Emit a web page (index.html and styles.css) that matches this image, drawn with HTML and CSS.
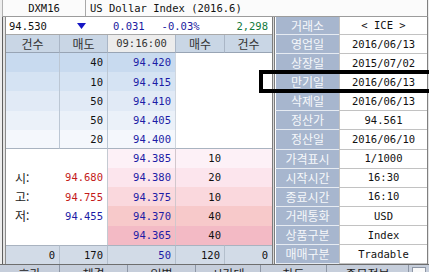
FILE: index.html
```html
<!DOCTYPE html>
<html lang="ko">
<head>
<meta charset="utf-8">
<title>DXM16</title>
<link rel="stylesheet" href="styles.css">
</head>
<body>
<div class="app">
  <div class="title-row">
    <div class="code">DXM16</div>
    <div class="name">US Dollar Index (2016.6)</div>
  </div>
  <div class="main">
    <div class="left">
      <div class="quote">
        <span class="last">94.530</span>
        <svg class="tri" width="9" height="6" viewBox="0 0 9 6"><path d="M0 0H9L4.5 6Z" fill="#1616c4"/></svg>
        <span class="chg">0.031</span>
        <span class="pct">-0.03%</span>
        <span class="vol">2,298</span>
      </div>
      <div class="book">
        <div class="c h ko">건수</div>
        <div class="c h ko">매도</div>
        <div class="c h time">09:16:00</div>
        <div class="c h ko">매수</div>
        <div class="c h ko last-h">건수</div>

        <div class="c a1 ac1"></div><div class="c a1 ac2">40</div><div class="c a1 ac3 px">94.420</div><div class="c aw"></div><div class="c aw"></div>
        <div class="c a2 ac1"></div><div class="c a2 ac2">10</div><div class="c a2 ac3 px">94.415</div><div class="c aw"></div><div class="c aw"></div>
        <div class="c a3 ac1"></div><div class="c a3 ac2">50</div><div class="c a3 ac3 px">94.410</div><div class="c aw"></div><div class="c aw"></div>
        <div class="c a4 ac1"></div><div class="c a4 ac2">50</div><div class="c a4 ac3 px">94.405</div><div class="c aw"></div><div class="c aw"></div>
        <div class="c a5 ac1 sep"></div><div class="c a5 ac2 sep">20</div><div class="c a5 ac3 px sep">94.400</div><div class="c aw sep"></div><div class="c aw sep"></div>

        <div class="c bl"></div><div class="c bv"></div><div class="c b1 bp px">94.385</div><div class="c b1">10</div><div class="c b1"></div>
        <div class="c bl ko">시:</div><div class="c bv up">94.680</div><div class="c b2 bp px">94.380</div><div class="c b2">20</div><div class="c b2"></div>
        <div class="c bl ko">고:</div><div class="c bv up">94.755</div><div class="c b3 bp px">94.375</div><div class="c b3">10</div><div class="c b3"></div>
        <div class="c bl ko">저:</div><div class="c bv dn">94.455</div><div class="c b4 bp px">94.370</div><div class="c b4">40</div><div class="c b4"></div>
        <div class="c bl"></div><div class="c bv"></div><div class="c b5 bp px">94.365</div><div class="c b5">40</div><div class="c b5"></div>

        <div class="c t">0</div><div class="c t">170</div><div class="c t px">50</div><div class="c t">120</div><div class="c t tl">0</div>
      </div>
    </div>
    <div class="divider"></div>
    <div class="info">
      <div class="c l ko first">거래소</div><div class="c v first">&lt; ICE &gt;</div>
      <div class="c l ko">영업일</div><div class="c v">2016/06/13</div>
      <div class="c l ko">상장일</div><div class="c v">2015/07/02</div>
      <div class="c l ko">만기일</div><div class="c v">2016/06/13</div>
      <div class="c l ko">삭제일</div><div class="c v">2016/06/13</div>
      <div class="c l ko">정산가</div><div class="c v">94.561</div>
      <div class="c l ko">정산일</div><div class="c v">2016/06/10</div>
      <div class="c l ko">가격표시</div><div class="c v">1/1000</div>
      <div class="c l ko">시작시간</div><div class="c v">16:30</div>
      <div class="c l ko">종료시간</div><div class="c v">16:10</div>
      <div class="c l ko">거래통화</div><div class="c v">USD</div>
      <div class="c l ko">상품구분</div><div class="c v">Index</div>
      <div class="c l ko">매매구분</div><div class="c v">Tradable</div>
    </div>
  </div>
  <div class="tabs">
    <div class="tab ko w1">호가</div>
    <div class="tab ko w2">체결</div>
    <div class="tab ko w3">일별</div>
    <div class="tab ko w4">시간대</div>
    <div class="tab ko w5">차트</div>
    <div class="tab ko w6">종목정보</div>
    <div class="tab-box"></div>
  </div>
  <div class="mark"></div>
</div>
</body>
</html>
```
FILE: styles.css
```css
* { box-sizing: border-box; }
html, body { margin: 0; padding: 0; }
body { background: #f0f0f0; }

.app {
  position: relative;
  width: 429px;
  height: 272px;
  overflow: hidden;
  background: #eeeeee;
  font-family: "DejaVu Sans Mono", "Noto Sans CJK KR", monospace;
  font-size: 10.5px;
  color: #111;
}

.ko { font-family: "Noto Sans CJK KR", sans-serif; font-size: 12px; }

/* title */
.title-row {
  display: flex;
  height: 17px;
  width: 426px;
  margin-left: 2px;
  background: #fbfbfb;
  border-bottom: 1px solid #9c9c9c;
  border-right: 1px solid #808080;
  border-left: 1px solid #b0b0b0;
}
.code {
  width: 83px;
  text-align: center;
  line-height: 16px;
  border-right: 1px solid #a8a8a8;
}
.name { padding-left: 4px; line-height: 16px; }

/* main */
.main {
  display: flex;
  height: 247px;
  margin-left: 2px;
  border-left: 1px solid #5f5f5f;
  padding-left: 2px;
  background: #e4e4e4;
}
.left {
  width: 267px;
  display: flex;
  flex-direction: column;
  border-left: 1px solid #8c8c8c;
  background: #fff;
}

.quote {
  height: 18px;
  display: flex;
  align-items: center;
  border-bottom: 1px solid #a9a9a9;
  background: #fff;
}
.last { width: 71px; padding-left: 3px; }
.tri { margin-top: 1px; }
.chg { margin-left: 27px; color: #1a1aa0; }
.pct { margin-left: 17px; color: #1a1aa0; }
.vol { margin-left: auto; padding-right: 4px; color: #137a3c; }

.book {
  flex: 1;
  display: grid;
  grid-template-columns: 54px 48px 68px 49px 47px;
  grid-template-rows: 18px repeat(11, 1fr);
  background: #fff;
}
.c {
  display: flex;
  align-items: center;
  justify-content: flex-end;
  padding-right: 4px;
  line-height: 1;
  white-space: nowrap;
}
.h {
  justify-content: center;
  padding: 0;
  background: #c9d6e5;
  color: #333;
  border-right: 1px solid #aab6c6;
  border-bottom: 1px solid #98a4b4;
}
.h.time { background: #ececec; }
.h.last-h { border-right: 0; }

.px { color: #1c1ca6; }

.a1 { background: #c8daef; }
.a2 { background: #d5e3f3; }
.a3 { background: #e1eaf6; }
.a4 { background: #ebf1f9; }
.a5 { background: #f4f7fc; }
.ac1, .ac2 { border-right: 1px solid #bcc7d4; }
.ac3 { border-right: 1px solid #d0d6de; }
.aw { background: #fff; }
.sep { border-bottom: 1px solid #a9b3c0; }

.bl { justify-content: flex-start; padding-left: 9px; color: #222; }
.bv { border-right: 1px solid #c4cad2; }
.bp { border-right: 1px solid #d2c6cc; }
.up { color: #c41a1a; }
.dn { color: #1c1ca6; }
.b1 { background: #fdf1f7; }
.b2 { background: #fce5ed; }
.b3 { background: #fad8dd; }
.b4 { background: #f7c9ca; }
.b5 { background: #f3bac5; }

.t {
  background: #d2dbe7;
  border-top: 1px solid #a9b3c0;
  border-right: 1px solid #b4bfcc;
}
.t.tl { border-right: 0; }

.divider {
  width: 3px;
  background: #d8d8d8;
  border-left: 1px solid #7c7c7c;
  border-right: 1px solid #7c7c7c;
}

.info {
  width: 153px;
  display: grid;
  grid-template-columns: 64px 88px;
  grid-template-rows: 18px repeat(12, 1fr);
  border-right: 1px solid #808080;
  background: #fff;
}
.l {
  justify-content: center;
  padding: 0;
  background: #a7b6ce;
  color: #f6f8fb;
  border-left: 1px solid #fff;
  border-bottom: 1px solid #e6ebf2;
}
.v {
  justify-content: center;
  padding: 0;
  border-left: 1px solid #c2c2c2;
  border-bottom: 1px solid #c2c2c2;
}

/* tabs */
.tabs {
  display: flex;
  height: 8px;
  border-top: 1px solid #6e6e6e;
  background: #c6cedb;
  overflow: hidden;
}
.tab {
  padding-top: 2px;
  line-height: 14px;
  text-align: center;
  color: #1e1e1e;
  border-right: 1px solid #8e97a6;
}
.w1 { width: 60px; }
.w2 { width: 68px; }
.w3 { width: 68px; }
.w4 { width: 65px; }
.w5 { width: 66px; }
.w6 { width: 82px; }
.tab-box {
  width: 14px;
  height: 8px;
  margin-left: 3px;
  margin-top: 2px;
  background: #fafafa;
  border: 1px solid #8e97a6;
}

/* annotation box */
.mark {
  position: absolute;
  left: 259px;
  top: 70px;
  width: 200px;
  height: 23px;
  border: 4px solid #000;
}
```
